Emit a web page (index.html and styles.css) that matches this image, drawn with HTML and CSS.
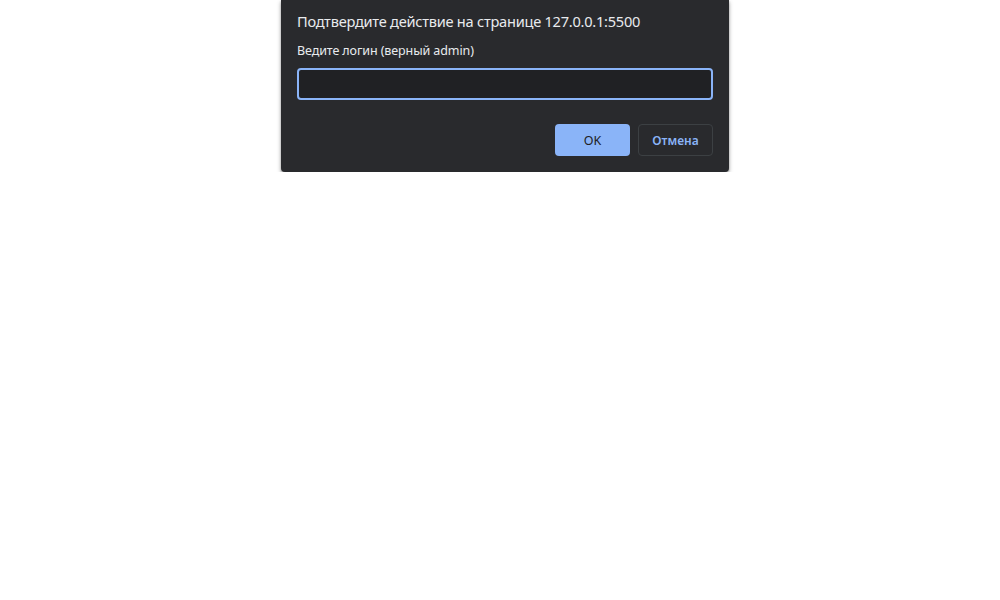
FILE: index.html
```html
<!DOCTYPE html>
<html lang="ru">
<head>
<meta charset="utf-8">
<link rel="stylesheet" href="styles.css">
</head>
<body>
<div class="dialog">
  <div class="title">Подтвердите действие на странице 127.0.0.1:5500</div>
  <div class="label">Ведите логин (верный admin)</div>
  <input class="field" type="text">
  <div class="buttons">
    <button class="btn ok">OK</button>
    <button class="btn cancel">Отмена</button>
  </div>
</div>
</body>
</html>
```
FILE: styles.css
```css
html, body {
  margin: 0;
  padding: 0;
  background: #ffffff;
}
body {
  font-family: "Noto Sans", "Open Sans", sans-serif;
}
.dialog {
  box-sizing: border-box;
  width: 448px;
  height: 172px;
  margin-left: 281px;
  background: #292a2d;
  border-radius: 0 0 4px 4px;
  box-shadow: 0 2px 4px rgba(0, 0, 0, 0.35), 0 1px 2px rgba(0, 0, 0, 0.2);
  padding: 10px 16px 0 16px;
  display: flex;
  flex-direction: column;
}
.title {
  color: #e8eaed;
  font-size: 14.6px;
  line-height: 22px;
  height: 22px;
  letter-spacing: -0.25px;
}
.label {
  color: #e8eaed;
  font-size: 12.5px;
  line-height: 18px;
  margin-top: 10px;
  letter-spacing: -0.1px;
}
.field {
  box-sizing: border-box;
  margin: 8px 0 0 0;
  width: 416px;
  height: 32px;
  background: #202124;
  border: 2px solid #8ab4f8;
  border-radius: 4px;
  outline: none;
  color: #e8eaed;
  padding: 0 6px;
}
.buttons {
  display: flex;
  justify-content: flex-end;
  gap: 8px;
  margin-top: 24px;
}
.btn {
  box-sizing: border-box;
  width: 75px;
  height: 32px;
  border-radius: 4px;
  font-family: "Noto Sans", "Open Sans", sans-serif;
  font-size: 12.5px;
  padding: 0;
  cursor: pointer;
}
.ok {
  background: #8ab4f8;
  border: none;
  color: #202124;
}
.cancel {
  background: #292a2d;
  border: 1px solid #3c4043;
  color: #8ab4f8;
  font-weight: 600;
  font-size: 12px;
}
```
